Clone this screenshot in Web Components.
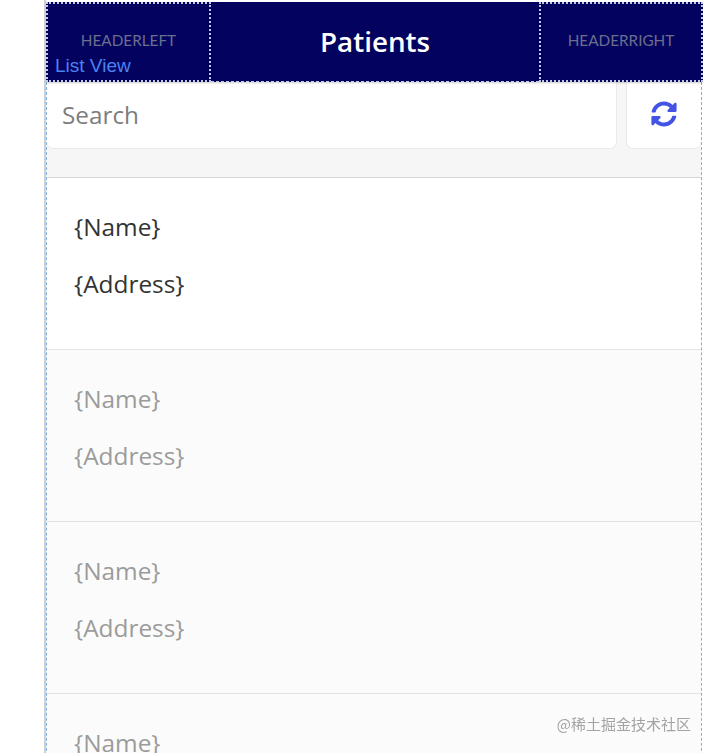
<!DOCTYPE html>
<html lang="en">
<head>
<meta charset="utf-8">
<title>Patients</title>
<style>
	html, body { margin: 0; height: 100%; overflow: hidden; background: #fff; }
	body { font-family: "Open Sans", "Noto Sans CJK SC", sans-serif; }
</style>
</head>
<body>
<template id="header-tpl">
	<style>
		:host {
			background: #03035f;
			box-shadow: 0 1px 2px rgba(0,0,0,.2);
			display: grid;
			grid-template-columns: 165px 328px 1fr;
			height: 80px;
			position: relative;
			width: 657px;
			z-index: 1;
		}
		.cell {
			align-items: center;
			border: 2px dotted #c4c7e0;
			box-sizing: border-box;
			color: #6b6e8c;
			display: flex;
			font: 15.3px Lato, sans-serif;
			justify-content: center;
			padding-bottom: 4px;
		}
		.mid {
			border: 0;
			border-bottom: 1px dashed #c4c7e0;
			color: #fff;
			font: 600 27.8px "Open Sans", sans-serif;
			padding-bottom: 1px;
		}
		.label {
			bottom: 5px;
			color: #4b82f2;
			font: 19px "Liberation Sans", sans-serif;
			left: 9px;
			position: absolute;
		}
	</style>
	<div class="cell"><slot name="left"></slot></div>
	<div class="cell mid"><slot name="title"></slot></div>
	<div class="cell"><slot name="right"></slot></div>
	<div class="label"><slot name="label"></slot></div>
</template>

<template id="search-tpl">
	<style>
		:host {
			background: #f6f6f6;
			border-bottom: 1px solid #d6d6d6;
			box-sizing: border-box;
			display: flex;
			gap: 9px;
			height: 96px;
			padding-bottom: 28px;
		}
		.box {
			background: #fff;
			border: solid #eaeaea;
			border-radius: 0 0 7px 7px;
			border-width: 0 1px 1px 0;
			box-sizing: border-box;
		}
		.input {
			color: #7d7d7d;
			flex: 1;
			font-size: 24.3px;
			line-height: 65px;
			padding-left: 15px;
		}
		.btn {
			align-items: center;
			border-width: 0 0 1px 1px;
			display: flex;
			justify-content: center;
			padding-bottom: 2px;
			width: 75px;
		}
		svg { display: block; fill: #4354e4; height: 26px; width: 26px; }
	</style>
	<div class="box input"><slot></slot></div>
	<div class="box btn">
		<svg viewBox="0 0 512 512"><path d="M370.700 133.300C339.500 104 298.900 88 255.800 88c-77.500.1-144.300 53.200-162.800 126.900-1.300 5.400-6.100 9.100-11.700 9.100H24.100c-7.500 0-13.200-6.800-11.800-14.200C33.900 94.900 134.800 8 256 8c66.400 0 126.800 26.100 171.300 68.700L463 41c15.100-15.100 41-4.400 41 17v134c0 13.300-10.700 24-24 24H346c-21.400 0-32.100-25.900-17-41l41.700-41.700zM32 296h134c21.400 0 32.100 25.900 17 41l-41.700 41.700c31.200 29.300 71.800 45.300 114.900 45.300 77.400-.1 144.300-53.100 162.800-126.800 1.300-5.400 6.100-9.100 11.700-9.100h57.300c7.500 0 13.200 6.800 11.800 14.200C478.100 417.100 377.200 504 256 504c-66.400 0-126.800-26.100-171.300-68.700L49 471c-15.100 15.100-41 4.400-41-17V320c0-13.300 10.700-24 24-24z"/></svg>
	</div>
</template>

<template id="row-tpl">
	<style>
		:host {
			border-bottom: 1px solid #e4e4e4;
			box-sizing: border-box;
			color: #333;
			display: flex;
			flex-direction: column;
			font-size: 24.4px;
			gap: 25px;
			height: 172px;
			line-height: 32px;
			padding: 33px 0 0 27px;
		}
		:host([muted]) { background: #fbfbfb; color: #9b9b9b; }
	</style>
	<slot></slot>
</template>

<template id="frame-tpl">
	<style>
		:host {
			border-left: 2px solid #d0d0d0;
			display: block;
			height: 751px;
			margin-left: 44px;
			overflow: hidden;
			padding-top: 2px;
			width: 657px;
		}
		.body {
			border: dashed #7fb0e0;
			border-width: 0 1px;
			margin-right: 1px;
		}
	</style>
	<slot name="head"></slot>
	<div class="body"><slot></slot></div>
</template>

<template id="mark-tpl">
	<style>
		:host {
			bottom: 19px;
			color: #a3a3a3;
			font: 15px "Noto Sans CJK SC", sans-serif;
			position: fixed;
			right: 19px;
		}
	</style>
	<slot></slot>
</template>

<app-frame>
	<app-header slot="head">
		<span slot="left">HEADERLEFT</span>
		<span slot="title">Patients</span>
		<span slot="right">HEADERRIGHT</span>
		<span slot="label">List View</span>
	</app-header>
	<search-bar>Search</search-bar>
	<patient-row><div>{Name}</div><div>{Address}</div></patient-row>
	<patient-row muted><div>{Name}</div><div>{Address}</div></patient-row>
	<patient-row muted><div>{Name}</div><div>{Address}</div></patient-row>
	<patient-row muted><div>{Name}</div></patient-row>
</app-frame>
<water-mark>@稀土掘金技术社区</water-mark>

<script>
	// every element just stamps its template into an open shadow root
	const stamp = (tag, tpl) => customElements.define(tag, class extends HTMLElement {
		constructor() {
			super();
			this.attachShadow({mode:'open'});
			this.shadowRoot.append(document.getElementById(tpl).content.cloneNode(true));
		}
	});

	stamp('app-frame', 'frame-tpl');
	stamp('app-header', 'header-tpl');
	stamp('search-bar', 'search-tpl');
	stamp('patient-row', 'row-tpl');
	stamp('water-mark', 'mark-tpl');
</script>
</body>
</html>
